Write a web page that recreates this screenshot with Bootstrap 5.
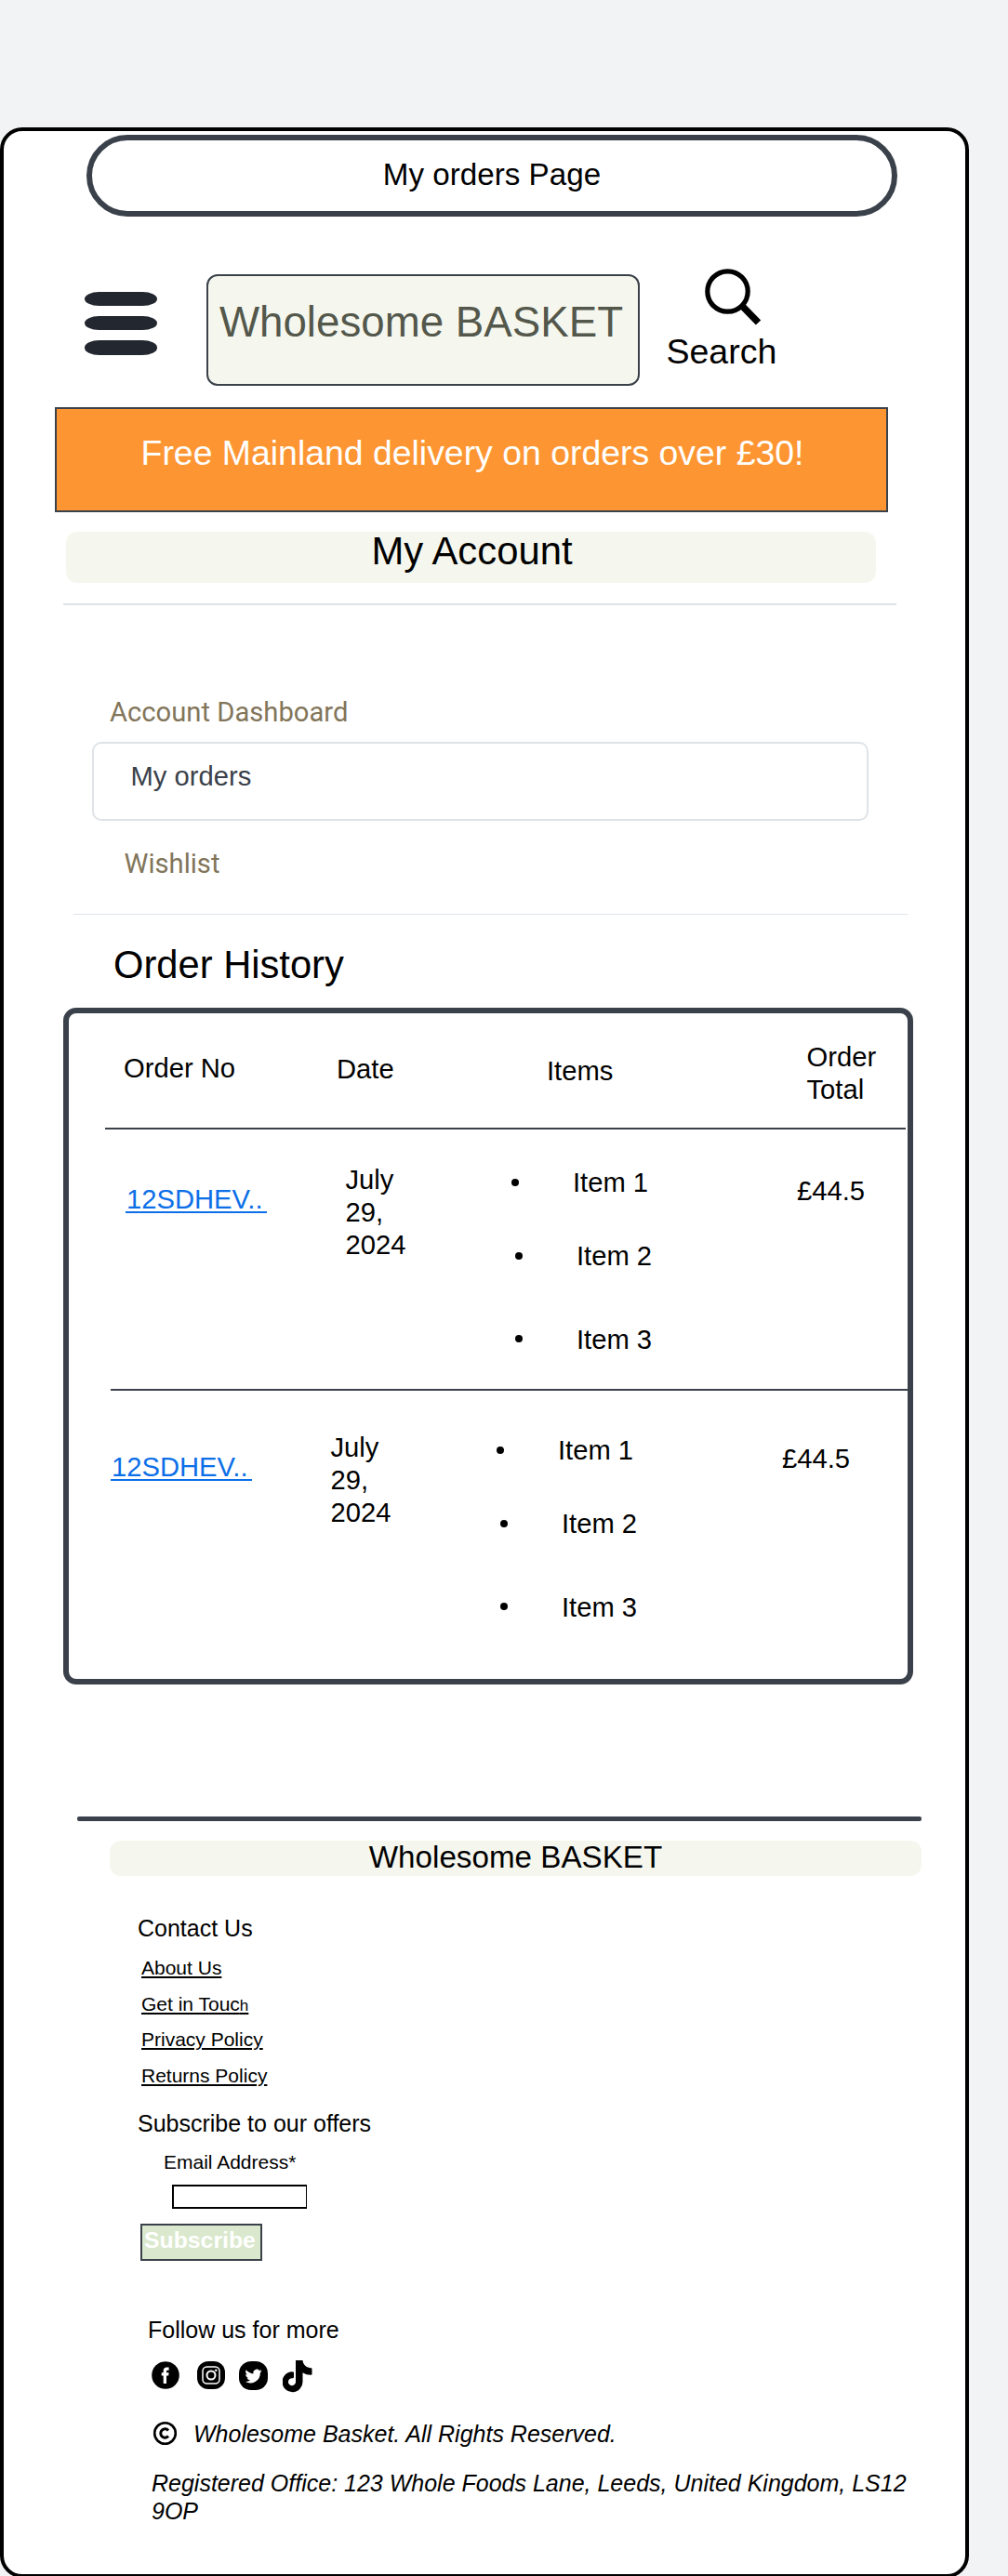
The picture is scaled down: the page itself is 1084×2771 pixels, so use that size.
<!DOCTYPE html>
<html lang="en">
<head>
<meta charset="utf-8">
<meta name="viewport" content="width=device-width, initial-scale=1">
<title>My orders Page</title>
<link href="https://cdn.jsdelivr.net/npm/bootstrap@5.3.0/dist/css/bootstrap.min.css" rel="stylesheet">
<style>
body{background:#f1f3f5;color:#000;font-family:"Liberation Sans",Arial,sans-serif;height:2771px;overflow:hidden}
.screen{margin-top:137px;width:1041.5px;height:2636px;border:4px solid #000;border-radius:24px;background:#fff}
.title-pill{margin:4.4px 0 0 89px;width:872px;height:88px;border:6px solid #3a414a;border-radius:44px;font-size:33.2px;line-height:73px}
.topbar{margin-top:55.6px;height:149px;padding-left:87px}
.burger{width:78px;margin-top:25px;gap:10.7px;border:0;background:none}
.burger span{height:15.4px;background:#232730;border-radius:16px/7.7px}
.brand-box{margin:6px 0 0 53px;width:466px;height:120px;padding-right:4px;border:2px solid #3a414a;border-radius:12px;background:#f5f7ee;color:#54574b;font-size:45.7px;line-height:100.6px;white-space:nowrap}
.search-box{margin-left:28.5px;width:120px;font-size:37.5px;line-height:44px}
.search-box svg{margin-left:41.5px}
.search-box div{margin-top:5px}
.promo{margin-left:55px;width:896px;height:113px;padding-left:2px;border:2px solid #3a414a;background:#fd9632;font-size:37.4px;line-height:94px}
.band{background:#f5f7ee;border-radius:12px}
.band-account{margin:21px 0 0 67px;width:871px;height:55px;padding-left:2px;font-size:41.8px;line-height:42.4px}
.rule{height:2px;background:#dfe3e8}
.side-link{font-family:Roboto,sans-serif;font-size:29.2px;line-height:35px;color:#82755a;text-decoration:none}
.current{margin:14.4px 0 0 95px;width:835px;height:85px;padding-left:39.5px;border:2px solid #dfe3e8;border-radius:10px;color:#3a414a;font-size:29.2px;line-height:70.5px}
.history{margin:30px 0 0 118px;font-size:41.7px;line-height:48px}
.orders{margin:22px 0 0 64px;width:914px;height:728px;border:6px solid #3a414a;border-radius:14px;font-size:29.2px;line-height:35px}
.orders-head{height:123px;padding-left:59px}
.line{height:2px;background:#3a414a}
.order{height:279px;padding-left:61px}
.order.second{padding-left:45px;padding-top:7px}
.c-no{width:236.5px;padding-top:57.7px}
.c-no a{display:inline-block;width:152px;height:32.5px;padding-left:1px;border-bottom:2px solid #0d6fe8;color:#0d6fe8;text-decoration:none}
.c-date{width:178.2px;padding:37px 90px 0 0}
.c-items{width:307.3px;margin:0;padding:40.2px 0 0;list-style:none}
.c-items li{display:flex;align-items:center}
.c-items li::before{content:"";width:8px;height:8px;border-radius:50%;background:#000;margin:-2px 58.3px 0 0}
.c-total{padding-top:49px}
.foot-line{margin:142px 0 0 79px;width:908px;height:5px;border-radius:2px;background:#3a414a}
.band-foot{margin:21px 0 0 114px;width:873px;height:38px;font-size:33.2px;line-height:35.6px}
.foot{padding-left:144px;font-size:25px;line-height:30px}
.foot-links{gap:15.4px;margin:16px 0 0 4px;font-size:21px;line-height:24px}
.foot-links a{color:#000;text-decoration-thickness:1.5px;text-underline-offset:2px}
.foot-links i{font-style:normal;font-size:17px;line-height:1}
.mail-label{margin:15px 0 0 28px;font-size:21px;line-height:24px}
.mail{display:block;margin:12.3px 0 0 37px;width:145px;height:26px;border:2px solid #000;border-right-width:1px;background:#fff}
.send{display:block;margin:16px 0 0 3px;width:131px;height:40px;padding:0;border:2px solid #3a414a;border-radius:0;background:#dae8cd;color:#fff;font-weight:700;font-size:24.8px;line-height:29px;text-align:left;padding:0 0 5px 2px}
.social{margin:18.5px 0 0 15px;height:35px}
.legal{font-style:italic}
</style>
<script src="https://cdn.jsdelivr.net/npm/bootstrap@5.3.0/dist/js/bootstrap.bundle.min.js"></script>
</head>
<body>
<main class="screen d-flex flex-column align-items-start">
  <div class="title-pill text-center">My orders Page</div>
  <header class="topbar d-flex align-items-start">
    <button class="burger d-flex flex-column p-0" aria-label="Menu"><span class="w-100"></span><span class="w-100"></span><span class="w-100"></span></button>
    <div class="brand-box text-center">Wholesome BASKET</div>
    <div class="search-box">
      <svg class="d-block" width="62" height="62" viewBox="0 0 62 62" fill="none" stroke="#000"><circle cx="24.500" cy="24.500" r="21.700" stroke-width="5.200"/><path d="M39.500 39.500L57.500 58" stroke-width="7.500"/></svg>
      <div>Search</div>
    </div>
  </header>
  <div class="promo text-center text-white">Free Mainland delivery on orders over £30!</div>
  <div class="band band-account text-center">My Account</div>
  <div class="rule" style="margin:22px 0 0 64px;width:896px"></div>
  <nav class="d-flex flex-column align-items-start">
    <a href="#" class="side-link" style="margin:97.6px 0 0 114px">Account Dashboard</a>
    <div class="current">My orders</div>
    <a href="#" class="side-link" style="margin:28.6px 0 0 129.500px">Wishlist</a>
  </nav>
  <div class="rule" style="margin:36.4px 0 0 75px;width:897px;height:1px"></div>
  <div class="history">Order History</div>
  <section class="orders">
    <div class="orders-head d-flex">
      <div style="width:229px;padding-top:42.200px">Order No</div>
      <div style="width:226px;padding-top:43.200px">Date</div>
      <div style="width:279.500px;padding-top:45.200px">Items</div>
      <div style="width:90px;padding-top:30.200px">Order Total</div>
    </div>
    <div class="line" style="margin-left:39px;width:861px"></div>
    <div class="order d-flex">
      <div class="c-no"><a href="#">12SDHEV..</a></div>
      <div class="c-date">July 29, 2024</div>
      <ul class="c-items"><li>Item 1</li><li style="margin:44px 0 0 4px">Item 2</li><li style="margin:54.500px 0 0 4px">Item 3</li></ul>
      <div class="c-total">£44.5</div>
    </div>
    <div class="line" style="margin-left:44.500px"></div>
    <div class="order second d-flex">
      <div class="c-no"><a href="#">12SDHEV..</a></div>
      <div class="c-date">July 29, 2024</div>
      <ul class="c-items"><li>Item 1</li><li style="margin:44px 0 0 4px">Item 2</li><li style="margin:54.500px 0 0 4px">Item 3</li></ul>
      <div class="c-total">£44.5</div>
    </div>
  </section>
  <div class="foot-line"></div>
  <div class="band band-foot text-center">Wholesome BASKET</div>
  <footer class="foot" style="margin-top:41px">
    <div>Contact Us</div>
    <div class="foot-links d-flex flex-column align-items-start">
      <a href="#">About Us</a><a href="#">Get in Touc<i>h</i></a><a href="#" style="margin-top:-1.800px">Privacy Policy</a><a href="#">Returns Policy</a>
    </div>
    <div style="margin-top:23.300px">Subscribe to our offers</div>
    <label class="mail-label d-block" for="mail">Email Address*</label>
    <input class="mail" id="mail" type="email">
    <button class="send">Subscribe</button>
    <div style="margin:59px 0 0 11px">Follow us for more</div>
    <div class="social d-flex align-items-start">
      <svg width="30" height="30" viewBox="0 0 30 30" style="margin-top:1px"><circle cx="15" cy="15" r="14.800"/><path d="M12.700 24v-8.500h-2v-3.300h2v-2c0-2.700 1.500-3.800 3.700-3.800h2.200v3.300h-1.400c-.9 0-1.200.4-1.200 1.100v1.400h2.600l-.4 3.300H16V24z" fill="#fff"/></svg>
      <svg width="30" height="30" viewBox="0 0 30 30" style="margin:1px 0 0 18.500px"><rect width="30" height="30" rx="12"/><g fill="none" stroke="#fff" stroke-width="1.500"><rect x="6" y="6" width="18" height="18" rx="4.500"/><circle cx="15" cy="15" r="4.500" stroke-width="2"/></g><circle cx="20.300" cy="9.700" r="1.200" fill="#fff"/></svg>
      <svg width="31" height="31" viewBox="0 0 31 31" style="margin:1px 0 0 15px"><rect width="31" height="31" rx="13"/><path transform="translate(6.500 7) scale(.76)" fill="#fff" d="M24 4.600a10 10 0 0 1-2.800.8 5 5 0 0 0 2.100-2.700 10 10 0 0 1-3.100 1.200 4.900 4.900 0 0 0-8.400 4.500A14 14 0 0 1 1.700 3.100a4.900 4.900 0 0 0 1.500 6.600 5 5 0 0 1-2.200-.6 4.900 4.900 0 0 0 3.900 4.900 5 5 0 0 1-2.200.1 4.900 4.900 0 0 0 4.600 3.400A9.900 9.900 0 0 1 0 19.500 14 14 0 0 0 21.500 7a10 10 0 0 0 2.500-2.400z"/></svg>
      <svg width="32" height="35" viewBox="0 0 32 35" style="margin-left:16.500px"><path d="M14 0h7.500c.3 4.500 4 8 9 8.300q1 0 1 1v5.500q0 1-1 1c-3.500 0-6.500-.8-9-2.500V23A11 11 0 1 1 10 12.200q2 0 2 1v5q0 1-1.500 1a4 4 0 1 0 3.500 4z"/></svg>
    </div>
    <div class="legal d-flex align-items-center" style="margin:28.500px 0 0 16px"><svg width="27" height="27" viewBox="0 0 27 27" fill="none" stroke="#000"><circle cx="13.500" cy="13.500" r="11.300" stroke-width="2.600"/><path d="M17 10.400a4.700 4.700 0 1 0 0 6.200" stroke-width="3"/></svg><span style="margin-left:17px">Wholesome Basket. All Rights Reserved.</span></div>
    <div class="legal" style="margin:23px 0 0 15px;width:830px">Registered Office: 123 Whole Foods Lane, Leeds, United Kingdom, LS12 9OP</div>
  </footer>
</main>
</body>
</html>
